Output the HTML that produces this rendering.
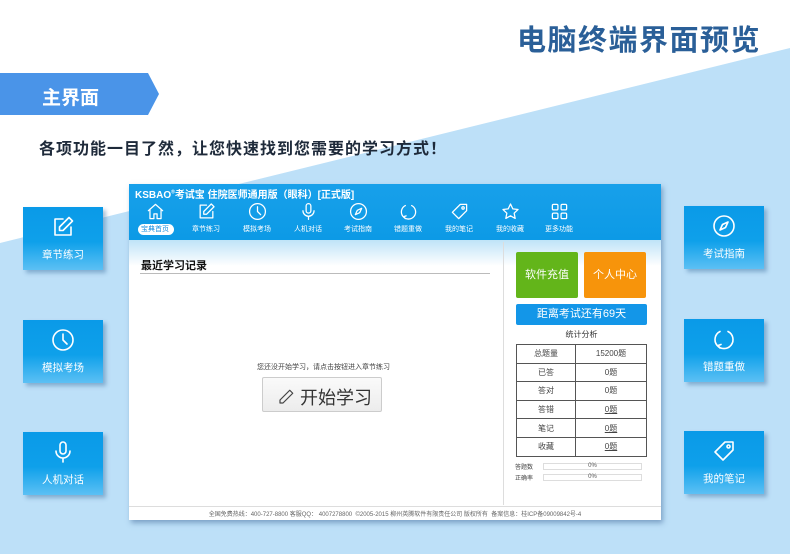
<!DOCTYPE html>
<html><head><meta charset="utf-8"><style>
*{margin:0;padding:0;box-sizing:border-box}
body{width:790px;height:554px;position:relative;overflow:hidden;background:#fff;font-family:"Liberation Sans","Noto Sans CJK SC",sans-serif}
.abs{position:absolute}
.tile{position:absolute;width:80px;height:63px;background:linear-gradient(#0a9ae8,#0ea0ea 55%,#5cc0f4);box-shadow:3px 3px 4px rgba(60,110,160,.45);color:#fff;text-align:center;font-size:10.5px}
.tile svg{display:block;margin:8px auto 0;width:24px;height:24px}
.tile span{display:block;margin-top:8px}
.nav{position:absolute;top:202px;width:50px;text-align:center;color:#fff;font-size:7px}
.nav svg{display:block;margin:0 auto;width:19px;height:19px}
.nav span{display:block;margin-top:4px;line-height:10px}
svg{fill:none;stroke:#fff;stroke-width:1.6;stroke-linecap:round;stroke-linejoin:round}
table{border-collapse:collapse}
td{border:1px solid #555;height:18.6px;font-size:8px;color:#444;text-align:center}
</style></head><body>
<svg class="abs" style="left:0;top:0" width="790" height="554"><polygon points="0,243 790,48 790,554 0,554" fill="#bde0f8" stroke="none"/></svg>
<div class="abs" style="left:517px;top:17px;font-size:29px;font-weight:bold;color:#2a5f98;letter-spacing:1.5px">电脑终端界面预览</div>
<svg class="abs" style="left:0;top:73px" width="162" height="43"><polygon points="0,0 148,0 159,21 148,42 0,42" fill="#4a94e8" stroke="none"/></svg>
<div class="abs" style="left:42px;top:83px;font-size:19px;font-weight:bold;color:#fff">主界面</div>
<div class="abs" style="left:39px;top:135px;font-size:16px;font-weight:bold;color:#1e2a3a;letter-spacing:1px">各项功能一目了然，让您快速找到您需要的学习方式！</div>

<div class="tile" style="left:23px;top:207px"><svg viewBox="0 0 24 24"><path d="M12 4H4v16h16v-8"/><path d="M18 2.5l3.5 3.5L12 15.5H8.5V12z"/></svg><span>章节练习</span></div>
<div class="tile" style="left:23px;top:320px"><svg viewBox="0 0 24 24"><circle cx="12" cy="12" r="10"/><path d="M12 6v6l4 4"/></svg><span>模拟考场</span></div>
<div class="tile" style="left:23px;top:432px"><svg viewBox="0 0 24 24"><rect x="9" y="2" width="6" height="12" rx="3"/><path d="M5 11a7 7 0 0 0 14 0M12 18v4"/></svg><span>人机对话</span></div>
<div class="tile" style="left:684px;top:206px"><svg viewBox="0 0 24 24"><circle cx="12" cy="12" r="10"/><path d="M16 8l-2.5 5.5L8 16l2.5-5.5z"/></svg><span>考试指南</span></div>
<div class="tile" style="left:684px;top:319px"><svg viewBox="0 0 24 24"><path d="M8 4.5A9 9 0 1 0 16 4.5"/><path d="M8 21l-2-2.5 3-1"/></svg><span>错题重做</span></div>
<div class="tile" style="left:684px;top:431px"><svg viewBox="0 0 24 24"><path d="M3 13L13 3h8v8L11 21z"/><circle cx="16.5" cy="7.5" r="1.5"/></svg><span>我的笔记</span></div>

<div class="abs" style="left:129px;top:184px;width:532px;height:336px;background:#fff;box-shadow:2px 3px 5px rgba(60,100,150,.5)">
 <div class="abs" style="left:0;top:0;width:532px;height:56px;background:linear-gradient(#18a0ea,#0c9ae6)"></div>
 <div class="abs" style="left:0;top:56px;width:532px;height:26px;background:linear-gradient(#bfe3f8,#fff)"></div>
 <div class="abs" style="left:6px;top:2px;color:#fff;font-size:10px;font-weight:bold">KSBAO<sup style="font-size:5px">®</sup>考试宝 住院医师通用版（眼科）[正式版]</div>
 <div class="abs" style="left:9px;top:40px;width:36px;height:11px;border-radius:6px;background:#fff"></div>
</div>
<div class="nav" style="left:130px"><svg viewBox="0 0 24 24"><path d="M3 11L12 3l9 8M5 9v12h5v-6h4v6h5V9"/></svg><span style="color:#1a8fe0">宝典首页</span></div>
<div class="nav" style="left:181px"><svg viewBox="0 0 24 24"><path d="M12 4H4v16h16v-8"/><path d="M18 2.5l3.5 3.5L12 15.5H8.5V12z"/></svg><span>章节练习</span></div>
<div class="nav" style="left:232px"><svg viewBox="0 0 24 24"><circle cx="12" cy="12" r="10"/><path d="M12 6v6l4 4"/></svg><span>模拟考场</span></div>
<div class="nav" style="left:283px"><svg viewBox="0 0 24 24"><rect x="9" y="2" width="6" height="12" rx="3"/><path d="M5 11a7 7 0 0 0 14 0M12 18v4"/></svg><span>人机对话</span></div>
<div class="nav" style="left:333px"><svg viewBox="0 0 24 24"><circle cx="12" cy="12" r="10"/><path d="M16 8l-2.5 5.5L8 16l2.5-5.5z"/></svg><span>考试指南</span></div>
<div class="nav" style="left:383px"><svg viewBox="0 0 24 24"><path d="M8 4.5A9 9 0 1 0 16 4.5"/><path d="M8 21l-2-2.5 3-1"/></svg><span>错题重做</span></div>
<div class="nav" style="left:434px"><svg viewBox="0 0 24 24"><path d="M3 13L13 3h8v8L11 21z"/><circle cx="16.5" cy="7.5" r="1.5"/></svg><span>我的笔记</span></div>
<div class="nav" style="left:485px"><svg viewBox="0 0 24 24"><path d="M12 2.5l2.9 6.2 6.6.8-4.9 4.6 1.3 6.6L12 17.4l-5.9 3.3 1.3-6.6-4.9-4.6 6.6-.8z"/></svg><span>我的收藏</span></div>
<div class="nav" style="left:534px"><svg viewBox="0 0 24 24"><rect x="3" y="3" width="7" height="7" rx="1.5"/><rect x="14" y="3" width="7" height="7" rx="1.5"/><rect x="3" y="14" width="7" height="7" rx="1.5"/><rect x="14" y="14" width="7" height="7" rx="1.5"/></svg><span>更多功能</span></div>

<div class="abs" style="left:141px;top:257px;font-size:11px;font-weight:bold;color:#111">最近学习记录</div>
<div class="abs" style="left:140px;top:273px;width:350px;height:1px;background:#bbb"></div>
<div class="abs" style="left:503px;top:242px;width:1px;height:263px;background:#ddd"></div>
<div class="abs" style="left:257px;top:362px;font-size:7px;color:#444">您还没开始学习，请点击按钮进入章节练习</div>
<div class="abs" style="left:262px;top:377px;width:120px;height:35px;border:1px solid #ccc;border-radius:2px;background:linear-gradient(#fafafa,#ececec);font-size:18px;color:#333;padding:6px 0 0 14px"><svg width="18" height="18" viewBox="0 0 24 24" style="stroke:#444;vertical-align:-2px"><path d="M17 3l4 4L8 20H4v-4z"/></svg> 开始学习</div>

<div class="abs" style="left:516px;top:252px;width:62px;height:46px;background:#63b51a;border-radius:2px;color:#fff;font-size:11px;text-align:center;line-height:46px">软件充值</div>
<div class="abs" style="left:584px;top:252px;width:62px;height:46px;background:#f7940b;border-radius:2px;color:#fff;font-size:11px;text-align:center;line-height:46px">个人中心</div>
<div class="abs" style="left:516px;top:304px;width:131px;height:21px;background:#1396e8;border-radius:2px;color:#fff;font-size:11px;text-align:center;line-height:21px">距离考试还有69天</div>
<div class="abs" style="left:516px;top:329px;width:131px;text-align:center;font-size:8px;color:#333">统计分析</div>
<table class="abs" style="left:516px;top:344px;width:131px">
<tr><td style="width:59px">总题量</td><td>15200题</td></tr>
<tr><td>已答</td><td>0题</td></tr>
<tr><td>答对</td><td>0题</td></tr>
<tr><td>答错</td><td><u>0题</u></td></tr>
<tr><td>笔记</td><td><u>0题</u></td></tr>
<tr><td>收藏</td><td><u>0题</u></td></tr>
</table>
<div class="abs" style="left:515px;top:462px;font-size:6px;color:#444">答题数</div>
<div class="abs" style="left:515px;top:473px;font-size:6px;color:#444">正确率</div>
<div class="abs" style="left:543px;top:463px;width:99px;height:7px;border:1px solid #ddd;font-size:6px;text-align:center;line-height:5px;color:#555">0%</div>
<div class="abs" style="left:543px;top:474px;width:99px;height:7px;border:1px solid #ddd;font-size:6px;text-align:center;line-height:5px;color:#555">0%</div>
<div class="abs" style="left:129px;top:506px;width:532px;height:1px;background:#ddd"></div>
<div class="abs" style="left:129px;top:509px;width:532px;text-align:center;font-size:6px;color:#666;white-space:nowrap">全国免费热线：400-727-8800 客服QQ： 4007278800 &nbsp;©2005-2015 柳州英腾软件有限责任公司 版权所有 &nbsp;备案信息：桂ICP备09009842号-4</div>
</body></html>
